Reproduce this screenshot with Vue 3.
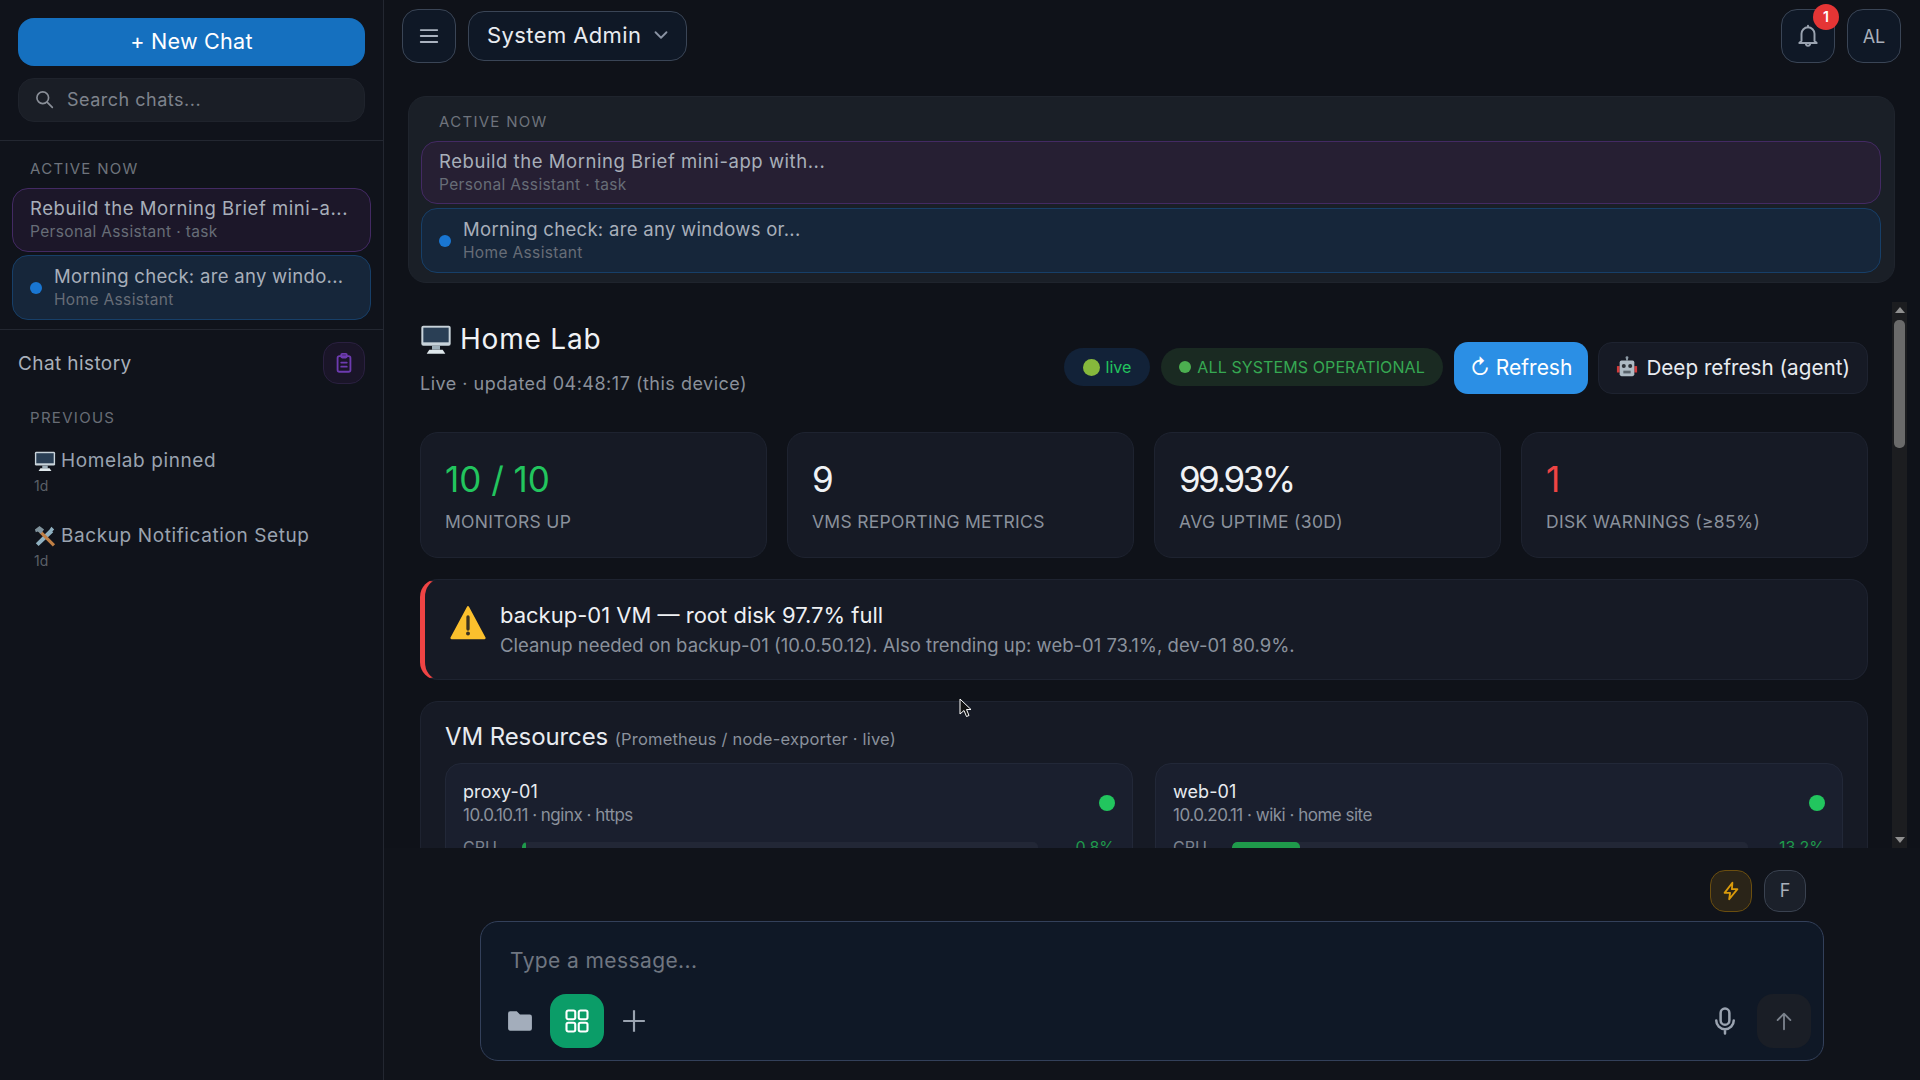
<script setup>
const stats = [
  { value: '10 / 10', label: 'MONITORS UP', tone: 'good' },
  { value: '9', label: 'VMS REPORTING METRICS', tone: '' },
  { value: '99.93%', label: 'AVG UPTIME (30D)', tone: 'tight' },
  { value: '1', label: 'DISK WARNINGS (≥85%)', tone: 'bad' }
]

const vms = [
  { name: 'proxy-01', meta: '10.0.10.11 · nginx · https', cpu: 0.8 },
  { name: 'web-01', meta: '10.0.20.11 · wiki · home site', cpu: 13.2 }
]
</script>

<template>
  <div class="app">
    <aside class="sidebar">
      <div class="side-top">
        <button class="new-chat">+ New Chat</button>
        <div class="search">
          <svg width="20" height="20" viewBox="0 0 24 24" fill="none" stroke="#8a8f98" stroke-width="2" stroke-linecap="round"><circle cx="10.5" cy="10.5" r="7"/><path d="M16 16l6 6"/></svg>
          <span>Search chats...</span>
        </div>
      </div>

      <div class="side-active">
        <div class="section-label">ACTIVE NOW</div>
        <div class="task purple compact">
          <div class="task-text">
            <div class="task-title">Rebuild the Morning Brief mini-a...</div>
            <div class="task-sub">Personal Assistant · task</div>
          </div>
        </div>
        <div class="task blue compact">
          <span class="task-dot"></span>
          <div class="task-text">
            <div class="task-title">Morning check: are any windo...</div>
            <div class="task-sub">Home Assistant</div>
          </div>
        </div>
      </div>

      <div class="history-head">
        <span>Chat history</span>
        <button class="clip-btn">
          <svg width="22" height="22" viewBox="0 0 24 24" fill="none" stroke="#6d3bb0" stroke-width="2" stroke-linecap="round" stroke-linejoin="round"><rect x="5" y="4.5" width="14" height="17" rx="2"/><rect x="9" y="2" width="6" height="4" rx="1"/><path d="M9 11.5h6M9 16h6"/></svg>
        </button>
      </div>
      <div class="section-label prev">PREVIOUS</div>
      <div class="history-item">
        <div class="history-title">
          <svg class="emoji" width="22" height="22" viewBox="0 0 24 24"><rect x="1" y="2" width="22" height="15" rx="1.5" fill="#c8d3da"/><rect x="2.5" y="3.5" width="19" height="11" fill="#2a3f55"/><rect x="9" y="17" width="6" height="3" fill="#9fb0ba"/><path d="M5 23l2-3h10l2 3z" fill="#dfe8ec"/></svg>
          Homelab pinned
        </div>
        <div class="history-age">1d</div>
      </div>
      <div class="history-item">
        <div class="history-title">
          <svg class="emoji" width="22" height="22" viewBox="0 0 24 24"><path d="M19 2l3 3-2 2 1 1-16 15-3-3L17 5z" fill="#8fb0c0"/><path d="M8 6l15 15-2.500 2.500L5.500 8.500z" fill="#c07f45"/><path d="M1 5l5-4 5 4-3.500 4.500-3.500-2.500-2 1z" fill="#7f929c"/></svg>
          Backup Notification Setup
        </div>
        <div class="history-age">1d</div>
      </div>
    </aside>

    <main class="main">
      <header class="topbar">
        <button class="square-btn">
          <svg width="22" height="22" viewBox="0 0 24 24" fill="none" stroke="#aab2bf" stroke-width="2" stroke-linecap="round"><path d="M3 5.5h18M3 12h18M3 18.5h18"/></svg>
        </button>
        <button class="agent-select">
          <span>System Admin</span>
          <svg width="22" height="22" viewBox="0 0 24 24" fill="none" stroke="#8a93a3" stroke-width="2" stroke-linecap="round" stroke-linejoin="round"><path d="M6 9l6 6 6-6"/></svg>
        </button>
        <div class="top-right">
          <button class="square-btn bell">
            <svg width="26" height="26" viewBox="0 0 24 24" fill="none" stroke="#9aa3b0" stroke-width="1.8" stroke-linecap="round" stroke-linejoin="round"><path d="M6 16.5V10a6 6 0 0 1 12 0v6.500l2 2H4z"/><path d="M10 19a2 2 0 0 0 4 0M12 2.500V4"/></svg>
            <span class="badge">1</span>
          </button>
          <button class="square-btn avatar">AL</button>
        </div>
      </header>

      <section class="active-panel">
        <div class="section-label wide">ACTIVE NOW</div>
        <div class="task purple">
          <div class="task-text">
            <div class="task-title">Rebuild the Morning Brief mini-app with...</div>
            <div class="task-sub">Personal Assistant · task</div>
          </div>
        </div>
        <div class="task blue">
          <span class="task-dot"></span>
          <div class="task-text">
            <div class="task-title">Morning check: are any windows or...</div>
            <div class="task-sub">Home Assistant</div>
          </div>
        </div>
      </section>

      <div class="scroller">
        <div class="scroll-content">
          <div class="lab-head">
            <div>
              <h1>
                <svg class="emoji" width="32" height="32" viewBox="0 0 24 24"><rect x="1" y="2" width="22" height="15" rx="1.5" fill="#c8d3da"/><rect x="2.500" y="3.500" width="19" height="11" fill="#2a3f55"/><rect x="9" y="17" width="6" height="3" fill="#9fb0ba"/><path d="M5 23l2-3h10l2 3z" fill="#dfe8ec"/></svg>
                Home Lab
              </h1>
              <p class="updated">Live · updated 04:48:17 (this device)</p>
            </div>
            <div class="lab-actions">
              <span class="pill live"><i class="ball"></i>live</span>
              <span class="pill ok"><i class="okdot"></i>ALL SYSTEMS OPERATIONAL</span>
              <button class="refresh">↻ Refresh</button>
              <button class="deep">
                <svg width="22" height="22" viewBox="0 0 24 24"><path d="M12 1v4" stroke="#8b98a3" stroke-width="2"/><circle cx="12" cy="2" r="1.600" fill="#8b98a3"/><rect x="1" y="11" width="3" height="7" fill="#d23b3b"/><rect x="20" y="11" width="3" height="7" fill="#d23b3b"/><rect x="4" y="5" width="16" height="17" rx="2" fill="#aebbc4"/><circle cx="8.500" cy="11" r="2.200" fill="#2c3238"/><circle cx="15.500" cy="11" r="2.200" fill="#2c3238"/><rect x="8" y="16" width="8" height="3" fill="#59636b"/></svg>
                Deep refresh (agent)
              </button>
            </div>
          </div>

          <div class="stats">
            <div v-for="s in stats" :key="s.label" class="stat">
              <div class="stat-value" :class="s.tone">{{ s.value }}</div>
              <div class="stat-label">{{ s.label }}</div>
            </div>
          </div>

          <div class="alert">
            <svg class="alert-icon" width="36" height="36" viewBox="0 0 24 24"><path d="M12 1.500L23 22H1z" fill="#fbc02d" stroke="#fbc02d" stroke-width="1.500" stroke-linejoin="round"/><path d="M12 8v8" stroke="#3b3220" stroke-width="2.200" stroke-linecap="round"/><circle cx="12" cy="19" r="1.300" fill="#3b3220"/></svg>
            <div>
              <div class="alert-title">backup-01 VM — root disk 97.7% full</div>
              <div class="alert-text">Cleanup needed on backup-01 (10.0.50.12). Also trending up: web-01 73.1%, dev-01 80.9%.</div>
            </div>
          </div>

          <div class="resources">
            <h2>VM Resources <small>(Prometheus / node-exporter · live)</small></h2>
            <div class="vm-grid">
              <div v-for="vm in vms" :key="vm.name" class="vm">
                <div class="vm-head">
                  <div>
                    <div class="vm-name">{{ vm.name }}</div>
                    <div class="vm-meta">{{ vm.meta }}</div>
                  </div>
                  <span class="vm-dot"></span>
                </div>
                <div class="vm-row">
                  <span class="vm-key">CPU</span>
                  <div class="vm-track"><div class="vm-fill" :style="{ width: vm.cpu + '%' }"></div></div>
                  <span class="vm-val">{{ vm.cpu }}%</span>
                </div>
              </div>
            </div>
          </div>
        </div>

        <div class="scrollbar">
          <span class="arrow up"></span>
          <div class="thumb-zone"><div class="thumb"></div></div>
          <span class="arrow down"></span>
        </div>
      </div>

      <div class="bottom">
        <div class="mode-row">
          <button class="mode bolt">
            <svg width="22" height="22" viewBox="0 0 24 24" fill="none" stroke="#d99a0b" stroke-width="2" stroke-linejoin="round"><path d="M13.500 3L5 14h6l-1 7 9-11h-6z"/></svg>
          </button>
          <button class="mode letter">F</button>
        </div>
        <div class="composer">
          <div class="placeholder">Type a message...</div>
          <div class="composer-tools">
            <svg width="26" height="22" viewBox="0 0 24 20"><path d="M1 3a2 2 0 0 1 2-2h6l3 3h9a2 2 0 0 1 2 2v11a2 2 0 0 1-2 2H3a2 2 0 0 1-2-2z" fill="#a3adbb"/></svg>
            <button class="tool-green">
              <svg width="28" height="28" viewBox="0 0 24 24" fill="none" stroke="#fff" stroke-width="1.8"><rect x="3" y="3" width="7.500" height="7.500" rx="1.500"/><rect x="13.500" y="3" width="7.500" height="7.500" rx="1.500"/><rect x="3" y="13.500" width="7.500" height="7.500" rx="1.500"/><rect x="13.500" y="13.500" width="7.500" height="7.500" rx="1.500"/></svg>
            </button>
            <svg class="plus" width="26" height="26" viewBox="0 0 24 24" fill="none" stroke="#9aa3b0" stroke-width="2"><path d="M12 2v20M2 12h20"/></svg>
            <span class="spacer"></span>
            <svg class="mic" width="30" height="30" viewBox="0 0 24 24" fill="none" stroke="#9aa3b0" stroke-width="2" stroke-linecap="round"><rect x="8.500" y="2" width="7" height="13" rx="3.500"/><path d="M5 11.500a7 7 0 0 0 14 0M12 18.500V22"/></svg>
            <button class="send">
              <svg width="22" height="22" viewBox="0 0 24 24" fill="none" stroke="#7b828c" stroke-width="2" stroke-linecap="round" stroke-linejoin="round"><path d="M12 21V4M5 11l7-7 7 7"/></svg>
            </button>
          </div>
        </div>
      </div>
    </main>

    <svg class="cursor" width="14" height="20" viewBox="0 0 14 20"><path d="M1 1v15l4-3.500 2.500 6 2.500-1-2.500-6H12z" fill="#111" stroke="#fff" stroke-width="1"/></svg>
  </div>
</template>

<style>
html, body { margin: 0; background: #0f1219; }
</style>

<style scoped>
* { box-sizing: border-box; }
button { font-family: inherit; cursor: pointer; }

.app {
  position: relative;
  display: flex;
  width: 1920px;
  height: 1080px;
  overflow: hidden;
  background: #0f1219;
  color: #e8ebf0;
  font-family: Inter, "Noto Sans", sans-serif;
}

.sidebar {
  width: 384px;
  flex: none;
  border-right: 1px solid #232731;
  background: #10131b;
}
.side-top {
  padding: 18px;
  display: flex;
  flex-direction: column;
  gap: 12px;
  border-bottom: 1px solid #232731;
}
.new-chat {
  height: 48px;
  padding: 0 0 2px;
  border: 0;
  border-radius: 16px;
  background: #1570bf;
  color: #fff;
  font-size: 21.600px;
  letter-spacing: .2px;
}
.search {
  height: 44px;
  display: flex;
  align-items: center;
  gap: 13px;
  padding: 0 15px 2px;
  border-radius: 16px;
  background: #1a1e26;
  border: 1px solid #1f232c;
  color: #7e838c;
  font-size: 18px;
  letter-spacing: .5px;
}
.side-active {
  padding: 19px 12px 9px;
  border-bottom: 1px solid #232731;
}
.section-label {
  padding-left: 18px;
  font-size: 15px;
  letter-spacing: 1.300px;
  color: #6e737c;
  line-height: 18px;
}
.side-active .section-label { margin-bottom: 10px; }

.task {
  display: flex;
  align-items: center;
  gap: 12px;
  height: 63px;
  padding: 0 17px;
  border-radius: 16px;
  margin-bottom: 4px;
}
.task.compact { height: 64px; margin-bottom: 3px; }
.task.purple { background: #261f33; border: 1.500px solid #432a63; }
.task.blue { background: #16263a; border: 1.500px solid #173f68; height: 65px; }
.compact.purple { background: #1c1729; }
.compact.blue { margin-bottom: 0; }
.task-dot { width: 12px; height: 12px; border-radius: 50%; background: #1976d2; flex: none; }
.task-text { padding-bottom: 2px; }
.task-title { font-size: 18.500px; letter-spacing: .55px; color: #a8afba; line-height: 24px; white-space: nowrap; }
.blue .task-title { letter-spacing: .3px; }
.task-sub { margin-top: 2px; font-size: 15.500px; letter-spacing: .35px; color: #676d77; line-height: 20px; white-space: nowrap; }

.history-head {
  display: flex;
  align-items: center;
  justify-content: space-between;
  padding: 12px 18px 0;
  font-size: 19px;
  letter-spacing: .4px;
  color: #a8afba;
}
.clip-btn {
  width: 42px;
  height: 42px;
  display: flex;
  align-items: center;
  justify-content: center;
  padding: 0;
  border-radius: 15px;
  border: 1px solid #2a2040;
  background: #1a1528;
}
.section-label.prev { margin: 25px 0 21px 12px; color: #686d76; }
.history-item { margin: 0 0 25px 34px; }
.history-title {
  display: flex;
  align-items: center;
  gap: 5px;
  font-size: 19px;
  letter-spacing: .6px;
  color: #9aa3b0;
  line-height: 26px;
}
.history-age { font-size: 14px; color: #5b6068; line-height: 24px; }

.main {
  flex: 1;
  min-width: 0;
  display: flex;
  flex-direction: column;
}
.topbar {
  display: flex;
  align-items: center;
  gap: 12px;
  height: 72px;
  padding: 0 19px 0 18px;
}
.square-btn {
  position: relative;
  width: 54px;
  height: 54px;
  display: flex;
  align-items: center;
  justify-content: center;
  padding: 0;
  border: 1px solid #3a4556;
  border-radius: 16px;
  background: #0f1826;
  color: #a8afba;
  font-size: 18px;
}
.agent-select {
  width: 219px;
  height: 50px;
  display: flex;
  align-items: center;
  gap: 9px;
  padding: 0 0 2px 18px;
  border: 1px solid #3a4556;
  border-radius: 16px;
  background: #0f1826;
  color: #e8ebf0;
  font-size: 22px;
  letter-spacing: .4px;
  white-space: nowrap;
}
.top-right { margin-left: auto; display: flex; gap: 12px; }
.badge {
  position: absolute;
  top: -6px;
  right: -5px;
  width: 26px;
  height: 26px;
  border-radius: 50%;
  background: #e53535;
  color: #fff;
  font-size: 14px;
  font-weight: 600;
  line-height: 26px;
  text-align: center;
}

.active-panel {
  margin: 24px 25px 0 24px;
  height: 187px;
  padding: 16px 13px 0 12px;
  border-radius: 18px;
  background: #1a1f27;
  border: 1px solid #1f242d;
}
.section-label.wide { padding-left: 18px; margin-bottom: 10px; }
.active-panel .task { height: 63px; }
.active-panel .task.blue { height: 65px; margin-bottom: 0; }

.scroller {
  height: 546px;
  margin-top: 19px;
  display: flex;
  overflow: hidden;
}
.scroll-content {
  width: 1510px;
  padding: 0 26px 0 36px;
  flex: none;
  overflow: hidden;
}
.lab-head {
  display: flex;
  justify-content: space-between;
  align-items: flex-end;
  padding-top: 18px;
}
h1 {
  display: flex;
  align-items: center;
  gap: 8px;
  margin: 0;
  font-size: 28px;
  font-weight: 400;
  letter-spacing: .8px;
  line-height: 38px;
  color: #f0f2f5;
}
.updated {
  margin: 13px 0 0;
  font-size: 18px;
  letter-spacing: .5px;
  color: #8a909a;
  line-height: 26px;
}
.lab-actions { display: flex; align-items: center; gap: 10px; margin-bottom: 3px; }
.pill {
  height: 38px;
  display: flex;
  align-items: center;
  gap: 6px;
  margin-top: -2px;
  padding: 0 19px;
  border-radius: 19px;
  font-size: 16px;
  white-space: nowrap;
}
.pill.live { background: #122238; color: #22c55e; }
.pill.ok { margin-left: 1px; padding: 0 18px; background: #1a2a22; color: #36a852; letter-spacing: .1px; }
.ball { width: 17px; height: 17px; border-radius: 50%; background: #86b83c; }
.okdot { width: 12px; height: 12px; border-radius: 50%; background: #4caf50; }
.refresh {
  height: 52px;
  margin-left: 1px;
  padding: 0 16px 2px;
  border: 0;
  border-radius: 14px;
  background: #2b8fe5;
  color: #fff;
  font-size: 21px;
  white-space: nowrap;
}
.deep {
  height: 52px;
  display: flex;
  align-items: center;
  gap: 8px;
  padding: 0 17px 2px;
  border: 1px solid #1e2330;
  border-radius: 14px;
  background: #161a25;
  color: #e8ebf0;
  font-size: 20.700px;
  white-space: nowrap;
}

.stats {
  display: grid;
  grid-template-columns: repeat(4, 1fr);
  gap: 20px;
  margin-top: 35px;
}
.stat, .alert, .resources {
  background: #161a25;
  border: 1px solid #1e2330;
  border-radius: 18px;
}
.stat { height: 126px; padding: 24px 24px 0; }
.stat-value { font-size: 35px; line-height: 44px; color: #f0f2f5; }
.stat-value.good { color: #22c55e; }
.stat-value.bad { color: #ef4444; }
.stat-value.tight { letter-spacing: -2.600px; }
.stat-label { margin-top: 9px; font-size: 17.500px; letter-spacing: .3px; color: #8a919c; line-height: 24px; }

.alert {
  display: flex;
  align-items: center;
  gap: 14px;
  height: 101px;
  margin-top: 21px;
  padding-left: 25px;
  border-left: 5px solid #ef4444;
}
.alert-icon { margin-top: -14px; }
.alert-title { font-size: 22px; color: #eef0f3; line-height: 30px; }
.alert-text { font-size: 18.500px; color: #8a919c; line-height: 30px; }

.resources { margin-top: 21px; padding: 20px 24px 30px; }
h2 {
  margin: 0 0 9px;
  font-size: 24px;
  font-weight: 400;
  letter-spacing: -.1px;
  line-height: 30px;
  color: #e8ebf0;
}
h2 small { font-size: 16.500px; letter-spacing: .2px; color: #8a919c; }
.vm-grid { display: grid; grid-template-columns: 688px 688px; gap: 22px; }
.vm {
  padding: 16px 17px 15px;
  border: 1px solid #222838;
  border-radius: 16px;
  background: #1a1f2e;
}
.vm-head { display: flex; align-items: center; justify-content: space-between; }
.vm-name { font-size: 18px; letter-spacing: .1px; color: #e8ebf0; line-height: 24px; }
.vm-meta { font-size: 17px; letter-spacing: -.5px; color: #8a919c; line-height: 22px; }
.vm-dot { width: 16px; height: 16px; border-radius: 50%; background: #22c55e; }
.vm-row { display: flex; align-items: center; margin-top: 11px; font-size: 16px; }
.vm-key { width: 59px; color: #7c838e; }
.vm-track { width: 516px; height: 10px; border-radius: 5px; background: #222736; overflow: hidden; }
.vm-fill { height: 100%; background: #1f9a4b; border-radius: 5px; min-width: 4px; }
.vm-val { margin-left: auto; color: #1f9a4b; }

.scrollbar {
  width: 15px;
  margin-left: -2px;
  background: #1c1d20;
  display: flex;
  flex-direction: column;
  align-items: center;
}
.arrow { width: 0; height: 0; flex: none; border-left: 5px solid transparent; border-right: 5px solid transparent; }
.arrow.up { margin: 5px 0 7px; border-bottom: 6px solid #8f8f8f; }
.arrow.down { margin: 7px 0 5px; border-top: 6px solid #8f8f8f; }
.thumb-zone { flex: 1; width: 100%; padding: 0 2px; }
.thumb { width: 100%; height: 128px; border-radius: 5px; background: #6a6a6a; }

.bottom { position: relative; flex: 1; background: #10131a; }
.mode-row {
  display: flex;
  justify-content: flex-end;
  gap: 12px;
  padding: 22px 114px 0 0;
}
.mode {
  width: 42px;
  height: 42px;
  display: flex;
  align-items: center;
  justify-content: center;
  padding: 0;
  border-radius: 15px;
  font-size: 18px;
}
.mode.bolt { background: #2a2418; border: 1px solid #6b4e0f; }
.mode.letter { padding-bottom: 2px; background: #1b202a; border: 1px solid #3a4250; color: #a8afba; }
.composer {
  height: 140px;
  margin: 9px 96px 0 96px;
  padding: 24px 12px 0 29px;
  border: 1px solid #33405a;
  border-radius: 18px;
  background: #0f1826;
}
.placeholder { font-size: 21px; letter-spacing: .4px; color: #6f7681; line-height: 30px; }
.composer-tools { display: flex; align-items: center; gap: 17px; margin-top: 18px; margin-left: -3px; }
.tool-green {
  width: 54px;
  height: 54px;
  display: flex;
  align-items: center;
  justify-content: center;
  padding: 0;
  border: 0;
  border-radius: 16px;
  background: #0b9d68;
}
.plus { margin-left: 0; }
.spacer { flex: 1; }
.mic { margin-right: 0; }
.send {
  width: 54px;
  height: 54px;
  display: flex;
  align-items: center;
  justify-content: center;
  padding: 0;
  border: 0;
  border-radius: 16px;
  background: #1a1e26;
}

.cursor { position: absolute; left: 959px; top: 698px; }
</style>
